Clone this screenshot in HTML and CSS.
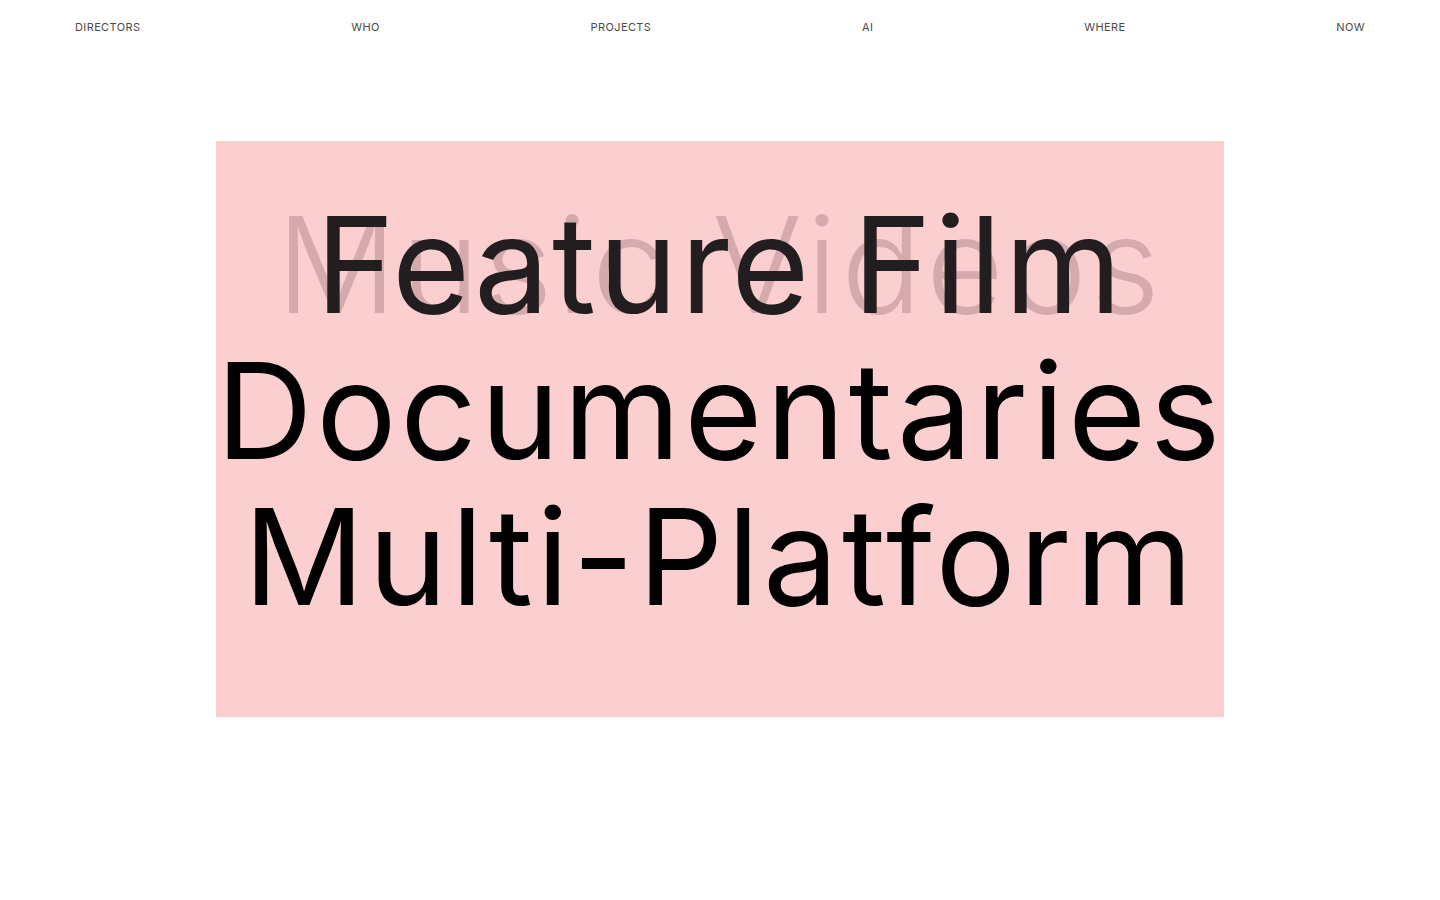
FILE: index.html
```html
<!DOCTYPE html>
<html lang="en">
<head>
<meta charset="utf-8">
<title>Studio</title>
<link rel="stylesheet" href="styles.css">
</head>
<body>
<nav class="nav">
  <a class="nav-link" href="#">DIRECTORS</a>
  <a class="nav-link" href="#">WHO</a>
  <a class="nav-link" href="#">PROJECTS</a>
  <a class="nav-link" href="#">AI</a>
  <a class="nav-link" href="#">WHERE</a>
  <a class="nav-link" href="#">NOW</a>
</nav>
<main class="main">
  <section class="stage">
    <div class="line line-first">
      <span class="ghost">Music Videos</span>
      <span class="current">Feature Film</span>
    </div>
    <div class="line">Documentaries</div>
    <div class="line">Multi-Platform</div>
  </section>
</main>
</body>
</html>
```
FILE: styles.css
```css
* { box-sizing: border-box; }
html, body { margin: 0; padding: 0; background: #ffffff; }
body {
  font-family: "Inter", "Liberation Sans", sans-serif;
  color: #000;
  height: 900px;
}
.nav {
  display: flex;
  justify-content: space-between;
  align-items: center;
  padding: 20px 75px 0 75px;
  height: 34px;
}
.nav-link {
  font-size: 11px;
  line-height: 14px;
  color: #4a4a4a;
  text-decoration: none;
  letter-spacing: 0.035em;
}
.main {
  display: flex;
  justify-content: center;
  padding-top: 107px;
}
.stage {
  width: 1008px;
  height: 576px;
  background: #fbcfd0;
  padding-top: 50px;
  display: flex;
  flex-direction: column;
  align-items: center;
}
.line {
  font-size: 134px;
  line-height: 146px;
  letter-spacing: 0.027em;
  font-weight: 400;
  white-space: nowrap;
  text-align: center;
}
.line-first {
  position: relative;
}
.ghost {
  position: absolute;
  left: 50%;
  top: 0;
  transform: translateX(-50%);
  color: #d5aaad;
  font-weight: 300;
  letter-spacing: 0.029em;
}
.current {
  position: relative;
  color: #221e1f;
  letter-spacing: 0.02em;
}
```
